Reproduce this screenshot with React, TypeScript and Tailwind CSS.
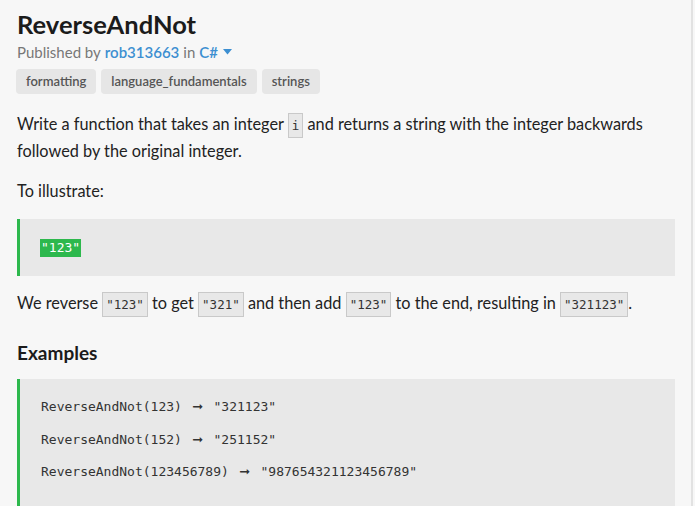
const sans = "font-['Lato','Liberation_Sans',sans-serif]";

function Code({ children }: { children: React.ReactNode }) {
  return (
    <code className="font-['DejaVu_Sans_Mono',monospace] text-[12.5px] leading-none bg-[#e8e8e8] border border-[#c9c9c9] px-[3px] py-[4px] text-[#333]">
      {children}
    </code>
  );
}

const tags = ["formatting", "language_fundamentals", "strings"];

const examples = [
  ["ReverseAndNot(123)", '"321123"'],
  ["ReverseAndNot(152)", '"251152"'],
  ["ReverseAndNot(123456789)", '"987654321123456789"'],
];

export default function App() {
  return (
    <div className={`${sans} w-[695px] h-[506px] overflow-hidden bg-[#f7f7f7]`}>
      <div className="w-[693px] h-full border-r-2 border-[#e2e2e2] pl-[17px] pr-[16px] text-[#222]">
        <h1 className="text-[25.5px] font-bold leading-none pt-[12px] text-[#1b1b1b]">ReverseAndNot</h1>
        <div className="text-[15px] text-[#777] mt-[3px] flex items-center gap-[4px]">
          <span>Published by</span>
          <span className="text-[#3d8fd1] font-semibold">rob313663</span>
          <span>in</span>
          <span className="text-[#3d8fd1] font-semibold">C#</span>
          <svg width="9" height="6" viewBox="0 0 9 6" className="ml-[1px]">
            <path d="M0 0h9L4.5 5.5z" fill="#3d8fd1" />
          </svg>
        </div>
        <div className="flex gap-[5px] mt-[6px] -ml-[1px]">
          {tags.map((t) => (
            <span
              key={t}
              className="h-[25px] px-[10px] flex items-center rounded-[4px] bg-[#e6e6e6] text-[13px] font-semibold text-[#555]"
            >
              {t}
            </span>
          ))}
        </div>
        <p className="text-[16.3px] leading-[27px] mt-[16px]">
          Write a function that takes an integer <Code>i</Code> and returns a string with the integer backwards
          followed by the original integer.
        </p>
        <p className="text-[16.3px] leading-[27px] mt-[13px]">To illustrate:</p>
        <div className="mt-[15px] h-[57px] bg-[#e8e8e8] border-l-[3px] border-[#2db84d] pl-[20px] flex items-center">
          <span className="font-['DejaVu_Sans_Mono',monospace] text-[13px] leading-[18px] bg-[#2db84d] text-white px-[1px]">
            "123"
          </span>
        </div>
        <p className="text-[16.3px] leading-[27px] mt-[13px]">
          We reverse <Code>"123"</Code> to get <Code>"321"</Code> and then add <Code>"123"</Code> to the end,
          resulting in <Code>"321123"</Code>.
        </p>
        <h2 className="text-[19px] font-bold mt-[27px] leading-none text-[#1b1b1b]">Examples</h2>
        <div className="mt-[17px] bg-[#e8e8e8] border-l-[3px] border-[#2db84d] pl-[21px] pt-[12px] pb-[20px]">
          {examples.map(([call, res]) => (
            <div
              key={call}
              className="font-['DejaVu_Sans_Mono',monospace] text-[13px] leading-[32.5px] text-[#333] whitespace-pre"
            >
              {call}{" "}
              <span className="inline-block w-[16px] text-center leading-none font-['DejaVu_Sans',sans-serif] font-bold">
                ➞
              </span>{" "}
              {res}
            </div>
          ))}
        </div>
      </div>
    </div>
  );
}
